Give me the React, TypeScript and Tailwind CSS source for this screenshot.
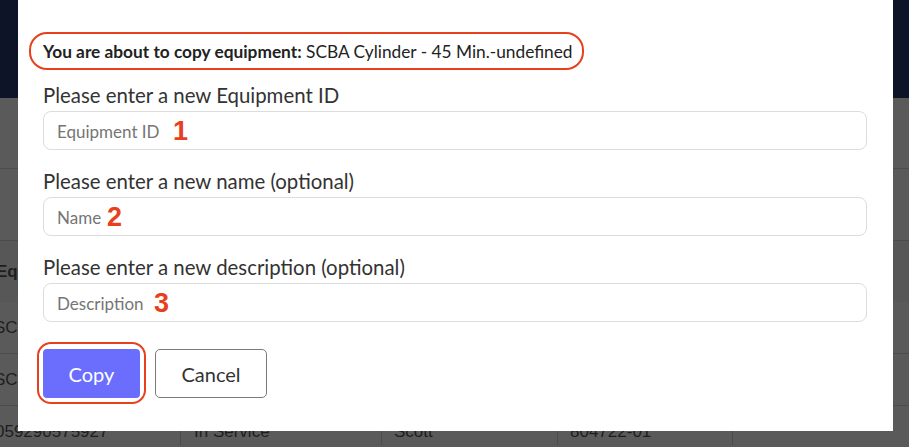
import React from "react";

const lato = { fontFamily: "Lato, 'Noto Sans', sans-serif" };

function Field({ label, placeholder, num, numLeft }: { label: string; placeholder: string; num: string; numLeft: number }) {
  return (
    <div>
      <div className="text-[20.4px] leading-[24px] text-[#333333]">{label}</div>
      <div className="relative mt-[4px] h-[39px] w-[824px] rounded-[8px] border border-[#dcdcdc] bg-white">
        <span className="absolute left-[13px] top-0 text-[17px] leading-[39px] text-[#757575]">{placeholder}</span>
        <span
          className="absolute top-0 text-[27px] font-bold leading-[39px] text-[#e8401c]"
          style={{ left: numLeft, fontFamily: "'Liberation Sans', Arial, sans-serif" }}
        >
          {num}
        </span>
      </div>
    </div>
  );
}

export default function App() {
  return (
    <div className="relative h-[447px] w-[909px] overflow-hidden bg-[#5a5a5a]" style={{ fontFamily: "'Liberation Sans', Arial, sans-serif" }}>
      {/* dimmed page behind */}
      <div className="flex flex-col">
        <div className="h-[98px] bg-[#0e1428]" />
        <div className="h-[71px] border-b border-[#4c4c4c]" />
        <div className="h-[72px] border-b border-[#4c4c4c]" />
        <div className="flex h-[61px] items-center bg-[#575757] text-[17px] font-bold text-[#1e1e1e]">
          <span className="ml-[-4px]">Equipment ID</span>
        </div>
        <div className="flex h-[52px] items-center border-b border-[#4c4c4c] text-[17px] text-[#1e1e1e]">
          <span className="ml-[-6px]">SCBA Cylinder - 45 Min.</span>
        </div>
        <div className="flex h-[52px] items-center border-b border-[#4c4c4c] text-[17px] text-[#1e1e1e]">
          <span className="ml-[-6px]">SCBA Cylinder - 45 Min.</span>
        </div>
        <div className="flex h-[41px] items-end pb-[2px] text-[17px] text-[#1e1e1e]">
          <div className="flex h-full w-[181px] items-end border-r border-[#4c4c4c] pb-[1px]">
            <span className="ml-[-5px]">059290575927</span>
          </div>
          <div className="flex h-full w-[201px] items-end border-r border-[#4c4c4c] pb-[1px] pl-[13px]">In Service</div>
          <div className="flex h-full w-[176px] items-end border-r border-[#4c4c4c] pb-[1px] pl-[12px]">Scott</div>
          <div className="flex h-full w-[175px] items-end border-r border-[#4c4c4c] pb-[1px] pl-[12px]">804722-01</div>
        </div>
      </div>

      {/* modal */}
      <div className="absolute left-[18px] top-0 h-[431px] w-[875px] bg-white px-[25px] pt-[42px]" style={lato}>
        <div className="relative w-fit text-[17.3px] leading-[20px] text-[#222222]">
          <span className="font-bold">You are about to copy equipment:</span> SCBA Cylinder - 45 Min.-undefined
          <span className="pointer-events-none absolute left-[-14px] right-[-11px] top-[-10px] bottom-[-8px] rounded-[18px] border-[2.5px] border-[#e8401c]" />
        </div>
        <div className="mt-[21px]">
          <Field label="Please enter a new Equipment ID" placeholder="Equipment ID" num="1" numLeft={129} />
        </div>
        <div className="mt-[19px]">
          <Field label="Please enter a new name (optional)" placeholder="Name" num="2" numLeft={63} />
        </div>
        <div className="mt-[19px]">
          <Field label="Please enter a new description (optional)" placeholder="Description" num="3" numLeft={110} />
        </div>
        <div className="mt-[27px] flex gap-[15px]">
          <div className="relative">
            <button className="h-[49px] w-[97px] rounded-[4px] bg-[#6b6efd] text-[20px] text-white">Copy</button>
            <span className="pointer-events-none absolute left-[-6px] right-[-6px] top-[-7px] bottom-[-6px] rounded-[14px] border-[2.5px] border-[#e8401c]" />
          </div>
          <button className="h-[49px] w-[112px] rounded-[5px] border border-[#7a7a7a] bg-white text-[20px] text-[#333333]">Cancel</button>
        </div>
      </div>
    </div>
  );
}
